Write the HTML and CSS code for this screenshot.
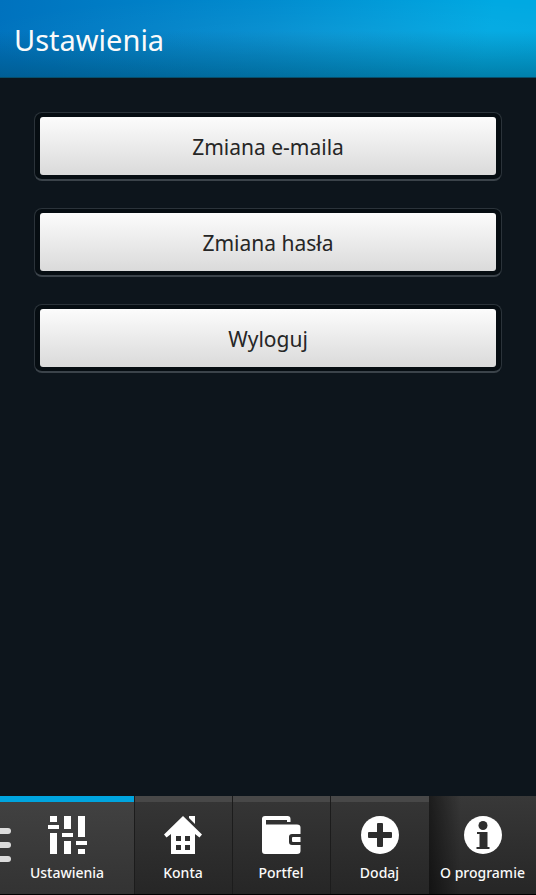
FILE: index.html
```html
<!DOCTYPE html>
<html lang="pl">
<head>
<meta charset="utf-8">
<meta name="viewport" content="width=device-width, initial-scale=1">
<title>Ustawienia</title>
<link rel="stylesheet" href="styles.css">
</head>
<body>
<header class="title-bar"><h1>Ustawienia</h1></header>
<main class="content">
  <div class="button-frame"><button type="button">Zmiana e-maila</button></div>
  <div class="button-frame"><button type="button">Zmiana hasła</button></div>
  <div class="button-frame"><button type="button">Wyloguj</button></div>
</main>
<nav class="tabs">
  <a class="tab active" href="#ustawienia">
    <span class="grip"><i></i><i></i><i></i></span>
    <svg viewBox="0 0 40 40" aria-hidden="true"><path d="M3 1h7v6H3zM1 10h11v4H1zM3 18h7v21H3zM17 1h7v13h-7zM15 18h11v4H15zM17 26h7v13h-7zM31 1h7v21h-7zM29 26h11v4H29zM31 34h7v5h-7z"/></svg>
    <span>Ustawienia</span>
  </a>
  <a class="tab" href="#konta">
    <svg viewBox="0 0 40 40" aria-hidden="true"><path fill-rule="evenodd" d="M20 1L1 19.500L3.500 22.500L8 19V39H32V19L36.500 22.500L39 19.500ZM13 21h5v5h-5zM22 21h5v5h-5zM13 30h5v5h-5zM22 30h5v5h-5z"/><path d="M26 1H32V9L26 3Z"/></svg>
    <span>Konta</span>
  </a>
  <a class="tab" href="#portfel">
    <svg viewBox="0 0 40 40" aria-hidden="true"><path d="M4 1H26.500Q29.500 1 29.500 4V7H26V5H5V9.500H36Q39.500 9.500 39.500 12.500V19H31Q28 19 28 22V27Q28 30 31 30H39.500V36Q39.500 39 36 39H4Q1 39 1 36V4Q1 1 4 1ZM32 22H39.500V27H32Q31 27 31 26V23Q31 22 32 22Z"/></svg>
    <span>Portfel</span>
  </a>
  <a class="tab" href="#dodaj">
    <svg viewBox="0 0 40 40" aria-hidden="true"><circle cx="20" cy="20" r="19"/><path class="cutout" d="M18 8h4q1 0 1 1v8h8q1 0 1 1v4q0 1-1 1h-8v8q0 1-1 1h-4q-1 0-1-1v-8H9q-1 0-1-1v-4q0-1 1-1h8V9q0-1 1-1z"/></svg>
    <span>Dodaj</span>
  </a>
  <a class="tab about" href="#o-programie">
    <svg viewBox="0 0 40 40" aria-hidden="true"><circle cx="20" cy="20" r="19"/><circle class="cutout" cx="20" cy="10.500" r="4.500"/><path class="cutout" d="M14 17H24.500V32H26.500V34H13.500V32H16.500V19H14z"/></svg>
    <span>O programie</span>
  </a>
</nav>
</body>
</html>
```
FILE: styles.css
```css
* { box-sizing: border-box; }
body {
  margin: 0;
  min-height: 100vh;
  display: flex;
  flex-direction: column;
  background: #0d151c;
  font-family: "Noto Sans", sans-serif;
}
.title-bar {
  display: flex;
  align-items: center;
  height: 78px;
  padding: 2px 14px 0;
  border-bottom: 1px solid #074e6b;
  background:
    linear-gradient(to bottom, transparent 40%, rgba(0, 55, 75, 0.36)),
    radial-gradient(ellipse at 60% 50%, rgba(255, 255, 255, 0.05), transparent 80%),
    linear-gradient(100deg, #0072be, #008ccf 50%, #00a9e2 90%);
}
h1 {
  margin: 0;
  color: #fafafa;
  font-size: 29px;
  font-weight: 400;
  line-height: 40px;
}
.content {
  flex: 1;
  display: flex;
  flex-direction: column;
  gap: 27px;
  padding: 34px;
}
.button-frame {
  padding: 4px 5px;
  border: 1px solid #2b333a;
  border-bottom: 2px solid #3b434a;
  border-radius: 8px;
  background: #060d12;
}
.button-frame button {
  display: block;
  width: 100%;
  height: 58px;
  padding: 2px 0 0;
  border: 0;
  border-radius: 3px;
  background: linear-gradient(#fcfcfc, #dadada);
  color: #262626;
  font: 21px/32px "Noto Sans", sans-serif;
}
.tabs {
  display: grid;
  grid-template-columns: 134fr 98fr 98fr 99fr 107fr;
  height: 99px;
  border-bottom: 1px solid #000;
}
.tab {
  position: relative;
  display: flex;
  flex-direction: column;
  align-items: center;
  padding-top: 19px;
  background:
    linear-gradient(to right, #1c1c1c 1px, transparent 1px),
    linear-gradient(#484848 6px, #353535 6px, #262626);
  color: #fafafa;
  font-size: 14px;
  font-weight: 500;
  line-height: 20px;
  text-decoration: none;
  white-space: nowrap;
}
.tab svg {
  width: 40px;
  height: 40px;
  margin-bottom: 8px;
  fill: #fff;
}
.tab .cutout { fill: #2e2e2e; }
.tab.active {
  background: linear-gradient(#00a5df 6px, #414141 6px, #333);
}
.tab.about {
  background:
    linear-gradient(to right, rgba(0, 0, 0, 0.5), transparent 30%),
    linear-gradient(#383838, #262626);
}
.grip {
  position: absolute;
  left: 0;
  top: 32px;
  display: grid;
  gap: 8px;
}
.grip i {
  width: 11px;
  height: 6px;
  border-radius: 0 3px 3px 0;
  background: #dcdcdc;
}
```
